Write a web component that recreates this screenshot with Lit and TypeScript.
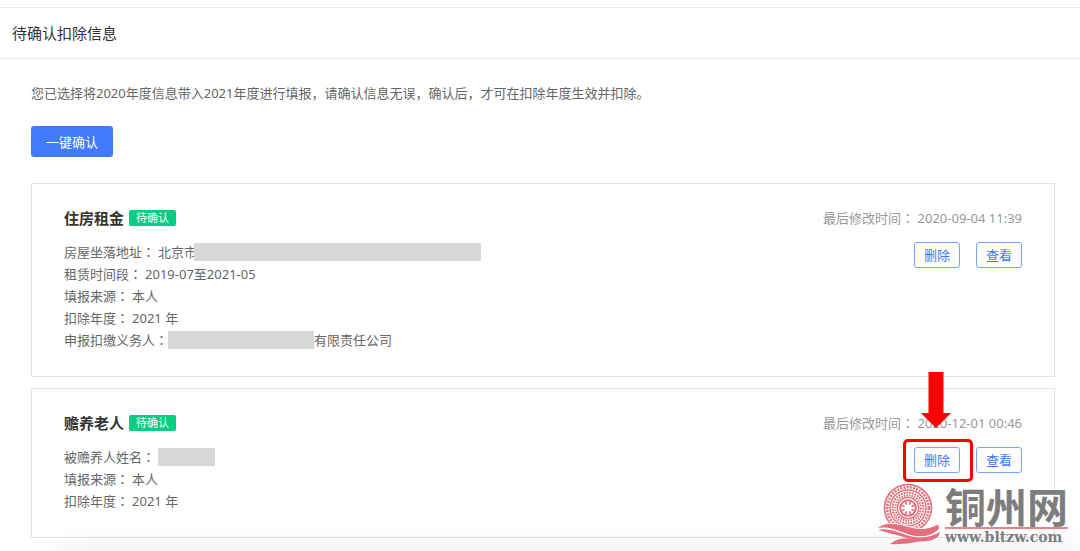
import { LitElement, html, css, svg } from "lit";
import { customElement, property } from "lit/decorators.js";

interface Field {
  label: string;
  before?: string;
  masked?: "long" | "medium" | "short";
  after?: string;
}

interface Deduction {
  title: string;
  modified: string;
  fields: Field[];
  marked: boolean;
}

const deductions: Deduction[] = [
  {
    title: "住房租金",
    modified: "2020-09-04 11:39",
    marked: false,
    fields: [
      { label: "房屋坐落地址", before: "北京市", masked: "long" },
      { label: "租赁时间段", before: "2019-07至2021-05" },
      { label: "填报来源", before: "本人" },
      { label: "扣除年度", before: "2021 年" },
      { label: "申报扣缴义务人", masked: "medium", after: "有限责任公司" },
    ],
  },
  {
    title: "赡养老人",
    modified: "2020-12-01 00:46",
    marked: true,
    fields: [
      { label: "被赡养人姓名", masked: "short" },
      { label: "填报来源", before: "本人" },
      { label: "扣除年度", before: "2021 年" },
    ],
  },
];

@customElement("deduction-card")
export class DeductionCard extends LitElement {
  @property({ attribute: false }) item!: Deduction;

  static styles = css`
    :host {
      display: block;
    }
    .card {
      display: flex;
      justify-content: space-between;
      align-items: flex-start;
      border: 1px solid #e4e4e4;
      padding: 23px 32px 25px;
    }
    .heading {
      display: flex;
      align-items: center;
      gap: 5px;
      height: 22px;
      margin-bottom: 12px;
    }
    .title {
      margin: 0;
      font-size: 15px;
      line-height: 22px;
      font-weight: 700;
      color: #333;
    }
    .tag {
      padding: 0 7px;
      border-radius: 2px;
      background: #05cd82;
      color: #fff;
      font-size: 11px;
      line-height: 16px;
    }
    .fields {
      margin: 0;
    }
    .field {
      display: flex;
      align-items: center;
      height: 22px;
      line-height: 22px;
    }
    .label {
      margin-right: 3px;
    }
    .colon {
      font-family: "Noto Sans CJK JP", sans-serif;
    }
    .value {
      display: flex;
      align-items: center;
      margin: 0;
    }
    .mask {
      height: 18px;
      margin-left: -3px;
      background: #d8d8d8;
    }
    .long {
      width: 287px;
    }
    .medium {
      width: 146px;
    }
    .short {
      width: 57px;
      margin-left: 0;
    }
    .side {
      display: flex;
      flex-direction: column;
      align-items: flex-end;
      gap: 13px;
    }
    .modified {
      line-height: 22px;
      color: #999;
    }
    .actions {
      display: flex;
      gap: 16px;
    }
    .slot {
      position: relative;
      display: flex;
    }
    .action {
      box-sizing: border-box;
      height: 26px;
      padding: 0 9px;
      border: 1px solid #7ba2fb;
      border-radius: 3px;
      background: #fff;
      color: #4178fa;
      font: inherit;
      line-height: 24px;
      cursor: pointer;
    }
    .ring {
      position: absolute;
      inset: -8px -13px -9px -11px;
      border: 3px solid #fe0000;
      border-radius: 5px;
      pointer-events: none;
    }
    .arrow {
      position: absolute;
      left: 7px;
      bottom: 45px;
      width: 30px;
      height: 56px;
      pointer-events: none;
    }
  `;

  render() {
    const { title, modified, fields, marked } = this.item;
    return html`
      <article class="card">
        <div>
          <div class="heading">
            <h2 class="title">${title}</h2>
            <span class="tag">待确认</span>
          </div>
          <dl class="fields">
            ${fields.map(
              (f) => html`<div class="field">
                <dt class="label">${f.label}<span class="colon">：</span></dt>
                <dd class="value">
                  ${f.before}${f.masked
                    ? html`<span class="mask ${f.masked}"></span>`
                    : null}${f.after}
                </dd>
              </div>`
            )}
          </dl>
        </div>
        <div class="side">
          <div class="modified">
            最后修改时间<span class="colon">：</span> <time>${modified}</time>
          </div>
          <div class="actions">
            <div class="slot">
              <button class="action" type="button">删除</button>
              ${marked
                ? html`<span class="ring"></span>
                    <svg class="arrow" viewBox="0 0 30 56" aria-hidden="true">
                      <path d="M7.500 0H22.500V41H30L15 56L0 41H7.500Z" fill="#fe0000" />
                    </svg>`
                : null}
            </div>
            <button class="action" type="button">查看</button>
          </div>
        </div>
      </article>
    `;
  }
}

@customElement("site-mark")
export class SiteMark extends LitElement {
  static styles = css`
    :host {
      display: flex;
      align-items: flex-end;
      gap: 4px;
    }
    .emblem {
      width: 64px;
      height: 62px;
    }
    .words {
      display: flex;
      flex-direction: column;
      color: #7d7d7d;
    }
    .name {
      font-family: "Noto Sans CJK SC", sans-serif;
      font-size: 41px;
      line-height: 44px;
      font-weight: 700;
      white-space: nowrap;
    }
    .rule {
      height: 2px;
      background: #e8828d;
    }
    .domain {
      font-family: "DejaVu Serif", serif;
      font-size: 14px;
      line-height: 16px;
      font-weight: 700;
    }
  `;

  render() {
    const rays = [0, 45, 90, 135, 180, 225, 270, 315];
    return html`
      <svg class="emblem" viewBox="0 0 64 62" aria-hidden="true">
        <circle cx="31" cy="25" r="24" fill="#fff" />
        <g fill="none" stroke="#e5707d">
          <circle cx="31" cy="25" r="23.500" stroke-width="1.600" />
          <circle cx="31" cy="25" r="20.800" stroke-width="2.600" stroke-dasharray="2 1.200" />
          <circle cx="31" cy="25" r="18" stroke-width="1.500" />
          <circle cx="31" cy="25" r="15.300" stroke-width="2.200" stroke-dasharray="1.800 1" />
          <circle cx="31" cy="25" r="12.600" stroke-width="2" stroke-dasharray="1.600 1" />
          <circle cx="31" cy="25" r="10.600" stroke-width="1.200" />
        </g>
        <circle cx="31" cy="25" r="8.800" fill="#e5707d" />
        ${rays.map(
          (a) => svg`<path d="M31 24L29.300 18.200H32.700Z" fill="#fff" transform="rotate(${a} 31 25)" />`
        )}
        <circle cx="31" cy="25" r="3.600" fill="#fff" />
        <path d="M0 46C4 40 12 40 21 41C33 43 44 50 61 41L63 45C54 56 39 55 29 51C18 47 9 43 0 46Z" fill="#e5707d" stroke="#fff" stroke-width="1" />
        <path d="M1 47C10 45 19 48 29 52C41 56 53 55 63 49C62 57 50 60 39 57C25 54 13 50 1 47Z" fill="#e5707d" />
        <path d="M13 61C22 54 32 54 48 58C36 59 27 62 13 61Z" fill="#e5707d" />
      </svg>
      <div class="words">
        <span class="name">铜州网</span>
        <span class="rule"></span>
        <span class="domain">www.bltzw.com</span>
      </div>
    `;
  }
}

@customElement("app-root")
export class AppRoot extends LitElement {
  static styles = css`
    :host {
      display: block;
      position: relative;
      box-sizing: border-box;
      min-height: 100vh;
      padding-top: 7px;
      overflow: hidden;
      background: #fff;
      color: #666;
      font-family: "Noto Sans", "Noto Sans CJK SC", sans-serif;
      font-size: 13px;
    }
    .header {
      padding: 0 12px;
      border: solid #ebebeb;
      border-width: 1px 0;
    }
    .page-title {
      margin: 0;
      font-size: 15px;
      line-height: 50px;
      font-weight: 400;
      color: #333;
    }
    .content {
      padding: 23px 25px 13px 31px;
    }
    .notice {
      margin: 0 0 22px;
      line-height: 22px;
    }
    .confirm {
      height: 31px;
      padding: 0 15px;
      border: 0;
      border-radius: 3px;
      background: #427bfa;
      color: #fff;
      font: inherit;
      cursor: pointer;
    }
    .cards {
      display: grid;
      gap: 11px;
      margin-top: 26px;
    }
    .shade {
      position: absolute;
      left: 60px;
      right: 0;
      bottom: -10px;
      height: 10px;
      box-shadow: 0 0 28px rgba(0, 0, 0, 0.14);
      pointer-events: none;
    }
    .mark {
      position: absolute;
      right: 12px;
      bottom: 6px;
    }
  `;

  render() {
    return html`
      <header class="header">
        <h1 class="page-title">待确认扣除信息</h1>
      </header>
      <main class="content">
        <p class="notice">您已选择将2020年度信息带入2021年度进行填报，请确认信息无误，确认后，才可在扣除年度生效并扣除。</p>
        <button class="confirm" type="button">一键确认</button>
        <div class="cards">
          ${deductions.map(
            (item) => html`<deduction-card .item=${item}></deduction-card>`
          )}
        </div>
      </main>
      <div class="shade"></div>
      <site-mark class="mark"></site-mark>
    `;
  }
}
